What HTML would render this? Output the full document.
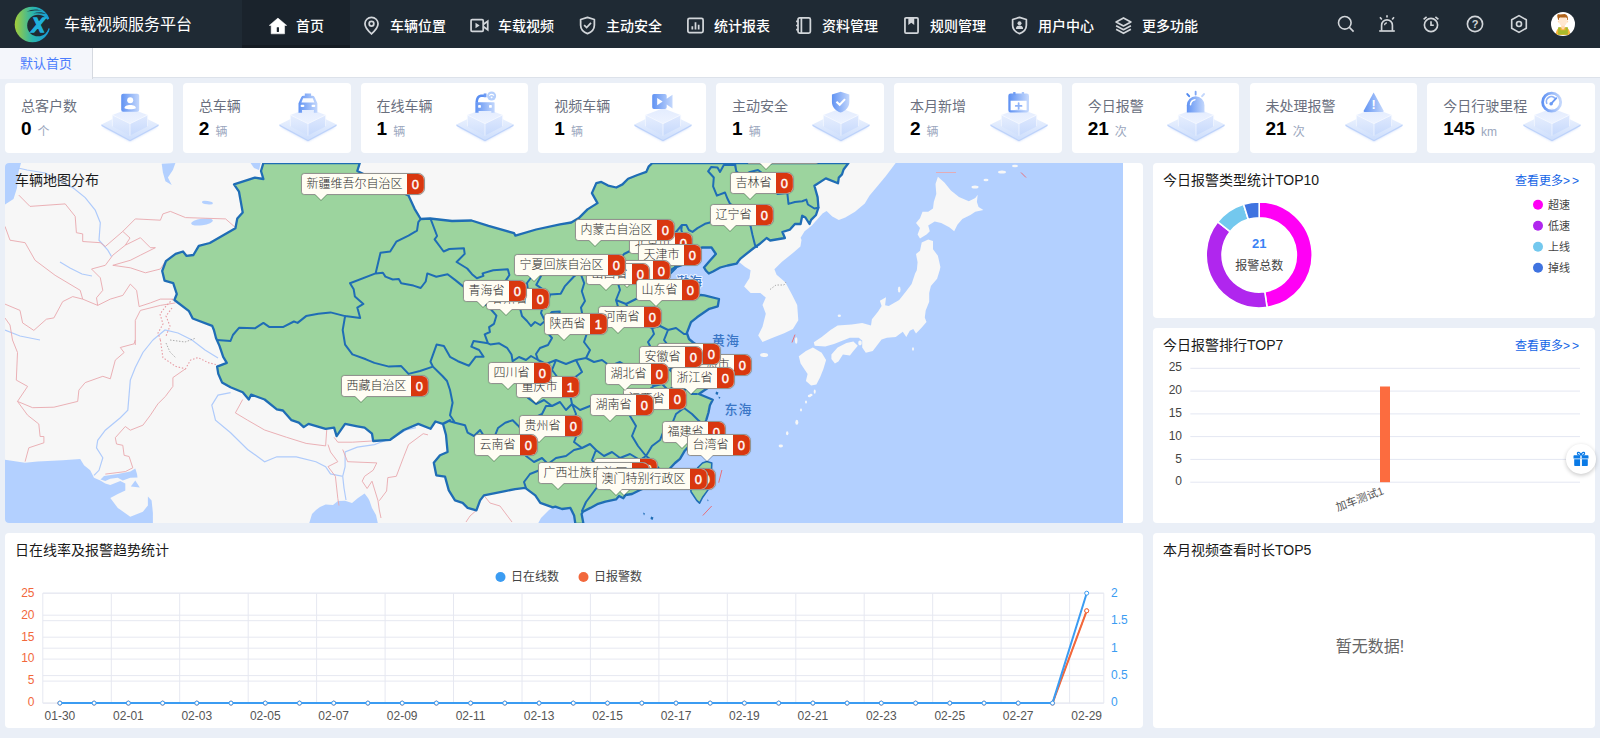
<!DOCTYPE html>
<html lang="zh-CN">
<head>
<meta charset="utf-8">
<title>车载视频服务平台</title>
<style>
*{box-sizing:border-box;margin:0;padding:0}
html,body{width:1600px;height:738px;overflow:hidden}
body{position:relative;background:#eaeff7;font-family:"Liberation Sans","Noto Sans CJK SC",sans-serif;color:#333;font-size:13px}
.abs{position:absolute}
#nav{position:absolute;left:0;top:0;width:1600px;height:48px;background:#1f2a34}
#nav .brand{position:absolute;left:64px;top:0;height:48px;line-height:50px;font-size:16px;color:#fff;white-space:nowrap;letter-spacing:0}
#nav .item{position:absolute;top:0;height:48px;width:108px;display:flex;align-items:center;justify-content:center;padding-top:1px;color:#fff;font-size:14px;font-weight:500;white-space:nowrap}
#nav .item svg{width:19px;height:19px;margin-right:9px;margin-top:1px;flex:none}
#nav .item.on{background:#1a232c;box-shadow:inset 0 -3px 0 #151c23}
#nav .tool{position:absolute;top:14px;width:20px;height:20px}
#tabs{position:absolute;left:0;top:48px;width:1600px;height:30px;background:#fff;border-bottom:1px solid #dde2ea}
#tabs .t{position:absolute;left:0;top:0;width:93px;height:31px;background:#f4f6fb;border-right:1px solid #d5d9e0;color:#4c7dfd;font-size:13px;line-height:32px;text-align:center;padding-left:0}
.card{position:absolute;top:83px;width:168px;height:70px;background:#fff;border-radius:4px}
.card .tt{position:absolute;left:16px;top:14px;font-size:14px;color:#6a6f7e;line-height:18px;white-space:nowrap}
.card .nm{position:absolute;left:16px;top:34px;font-size:19px;font-weight:bold;color:#000;line-height:24px;white-space:nowrap}
.card .nm i{font-style:normal;font-weight:normal;font-size:12px;color:#9aa6bd;margin-left:6px;position:relative;top:1px}
.card svg{position:absolute;right:8px;top:6px;width:70px;height:60px}
.panel{position:absolute;background:#fff;border-radius:4px;overflow:hidden}
.ptitle{position:absolute;left:10px;top:8px;font-size:13px;color:#1a1a1a;line-height:18px;white-space:nowrap}
.more{position:absolute;right:14px;top:9px;font-size:12px;color:#1464e6;line-height:18px;white-space:nowrap}
.lb{position:absolute;height:22px;white-space:nowrap;font-size:12px;line-height:19px}
.lb i{display:flex;height:22px;border:1px solid #939390;border-radius:4px 7px 7px 4px;overflow:hidden;font-style:normal;background:#fffdf3;box-shadow:0 0 1px rgba(0,0,0,.25)}
.lb b{display:block;font-weight:300;background:#fffdf3;padding:0 4px 0 4.5px;color:#2e2e2e;height:20px;line-height:21px}
.lb u{display:block;text-decoration:none;width:17.5px;height:20px;background:#d9370f;color:#fff;font-weight:normal;-webkit-text-stroke:.4px #fff;text-align:center;line-height:21px;font-size:13px;box-shadow:inset -1px 0 0 rgba(255,255,255,.12)}
.lb s{position:absolute;left:14px;top:21px;width:0;height:0;border-left:6px solid transparent;border-right:6px solid transparent;border-top:6.5px solid #fffdf3;text-decoration:none;filter:drop-shadow(0 1px 0.5px rgba(0,0,0,.3))}
</style>
</head>
<body>
<div id="nav">
<svg class="abs" style="left:12px;top:4px" width="42" height="42" viewBox="0 0 42 42">
<defs><linearGradient id="lg" x1="0" y1="0" x2="1" y2="0"><stop offset="0" stop-color="#a4cd39"/><stop offset=".5" stop-color="#2bb5ab"/><stop offset="1" stop-color="#1598e0"/></linearGradient>
<mask id="lm"><rect width="42" height="42" fill="#fff"/><circle cx="26" cy="21.5" r="10.8" fill="#000"/><path d="M26 21 L42 12 L42 26 Z" fill="#000"/></mask></defs>
<circle cx="20.5" cy="20.5" r="17.8" fill="url(#lg)" mask="url(#lm)"/>
<path d="M14 8 C20 4.5 26 5 30 6.8 C24 6.2 19 7 14 8Z M21 9.5 C26 7.5 31 8 34 10 C29 9.3 25 9.2 21 9.5Z" fill="#1f2a34" opacity=".85"/>
<text x="26.3" y="28.2" font-family="Liberation Sans,sans-serif" font-size="19.5" font-weight="bold" font-style="italic" text-anchor="middle" fill="#1fb0dc" stroke="#1fb0dc" stroke-width="1.3">X</text>
</svg>
<div class="brand">车载视频服务平台</div>
<div class="item on" style="left:242px"><svg viewBox="0 0 18 18"><path d="M9.4 2 L1.2 8.9 H3 V16.9 H15.7 V8.9 H17.7 Z" fill="#fff" stroke="#fff" stroke-width=".5" stroke-linejoin="round"/><rect x="8.3" y="10.6" width="2.1" height="4.6" rx=".4" fill="#1a232c"/></svg>首页</div>
<div class="item" style="left:350px"><svg viewBox="0 0 18 18" fill="none" stroke="#d2d6da" stroke-width="1.65"><path d="M9 1.3c3.5 0 6.2 2.7 6.2 6.1 0 4-6.2 9.6-6.2 9.6S2.8 11.4 2.8 7.4C2.8 4 5.5 1.3 9 1.300z"/><circle cx="9" cy="7.4" r="2.2"/></svg>车辆位置</div>
<div class="item" style="left:458px"><svg viewBox="0 0 18 18" fill="none" stroke="#d2d6da" stroke-width="1.65"><rect x="1" y="3.5" width="11.5" height="11" rx="1"/><path d="M12.5 8 L16.8 5 V13 L12.5 10"/><path d="M5.2 6.3 L9.2 9 L5.2 11.700z" fill="#d2d6da" stroke="none"/></svg>车载视频</div>
<div class="item" style="left:566px"><svg viewBox="0 0 18 18" fill="none" stroke="#d2d6da" stroke-width="1.65"><path d="M9 1.3 L15.5 3.3 V8.8 c0 4.2 -3 6.6 -6.5 7.9 C5.5 15.4 2.5 13 2.5 8.8 V3.3 Z" stroke-linejoin="round"/><path d="M5.8 8.6 L8.2 11 L12.3 6.6"/></svg>主动安全</div>
<div class="item" style="left:674px"><svg viewBox="0 0 18 18" fill="none" stroke="#d2d6da" stroke-width="1.65"><rect x="1.8" y="2.3" width="14.4" height="13.4" rx="1.5"/><path d="M6 12.8 V9.8 M9 12.8 V6 M12 12.8 V8.3"/></svg>统计报表</div>
<div class="item" style="left:782px"><svg viewBox="0 0 18 18" fill="none" stroke="#d2d6da" stroke-width="1.65"><rect x="3.8" y="1.8" width="11.7" height="14.4" rx="1.5"/><path d="M7 1.8 V16.2 M2 5 H4 M2 9 H4 M2 13 H4"/></svg>资料管理</div>
<div class="item" style="left:890px"><svg viewBox="0 0 18 18" fill="none" stroke="#d2d6da" stroke-width="1.65"><rect x="2.8" y="1.8" width="12.4" height="14.4" rx="1"/><path d="M6 2 h5.6 v6.6 l-2.8 -2.2 l-2.8 2.2 z" fill="#d2d6da" stroke="none"/></svg>规则管理</div>
<div class="item" style="left:998px"><svg viewBox="0 0 18 18" fill="none" stroke="#d2d6da" stroke-width="1.65"><path d="M9 1.3 L15.5 3.3 V8.8 c0 4.2 -3 6.6 -6.5 7.9 C5.5 15.4 2.5 13 2.5 8.8 V3.3 Z" stroke-linejoin="round"/><circle cx="9" cy="6.8" r="1.9" fill="#d2d6da" stroke="none"/><path d="M5.6 12.3 c0-2.2 1.6-3.2 3.4-3.2 s3.4 1 3.4 3.2 z" fill="#d2d6da" stroke="none"/></svg>用户中心</div>
<div class="item" style="left:1102px"><svg viewBox="0 0 18 18" fill="none" stroke="#d2d6da" stroke-width="1.65" stroke-linejoin="round"><path d="M9 1.8 L16 5.6 L9 9.4 L2 5.6 Z"/><path d="M2 9.2 L9 13 L16 9.2"/><path d="M2 12.6 L9 16.4 L16 12.6"/></svg>更多功能</div>

<svg class="tool" style="left:1336px" viewBox="0 0 20 20" fill="none" stroke="#d2d6da" stroke-width="1.6"><circle cx="8.8" cy="8.8" r="6.3"/><path d="M13.4 13.4 L17.6 17.6"/></svg>
<svg class="tool" style="left:1377px" viewBox="0 0 20 20" fill="none" stroke="#d2d6da" stroke-width="1.65"><path d="M4.6 16.8 V11.2 a5.4 5.4 0 0 1 10.8 0 V16.8"/><path d="M2.2 17 H17.8"/><path d="M10 1.2 V3.6 M3 3.2 L4.8 5.4 M17 3.2 L15.2 5.4"/><path d="M7.6 11.2 a2.4 2.4 0 0 1 2.4-2.4" stroke-width="1.2"/></svg>
<svg class="tool" style="left:1421px" viewBox="0 0 20 20" fill="none" stroke="#d2d6da" stroke-width="1.65"><circle cx="10" cy="11" r="6.6"/><path d="M10 7.2 V11.2 H12.8"/><path d="M2.6 5.3 L5.6 2.8 M17.4 5.3 L14.4 2.8"/></svg>
<svg class="tool" style="left:1465px" viewBox="0 0 20 20" fill="none" stroke="#d2d6da" stroke-width="1.65"><circle cx="10" cy="10" r="7.6"/><text x="10" y="14" text-anchor="middle" font-family="Liberation Sans,sans-serif" font-weight="bold" font-size="11" fill="#d2d6da" stroke="none">?</text></svg>
<svg class="tool" style="left:1509px" viewBox="0 0 20 20" fill="none" stroke="#d2d6da" stroke-width="1.65" stroke-linejoin="round"><path d="M10 1.6 L17.3 5.8 V14.2 L10 18.4 L2.7 14.2 V5.8 Z"/><circle cx="10" cy="10" r="2.5"/></svg>
<svg class="abs" style="left:1551px;top:11.800px" width="24" height="24" viewBox="0 0 24 24"><defs><clipPath id="av"><circle cx="12" cy="12" r="12"/></clipPath></defs><circle cx="12" cy="12" r="12" fill="#fff"/><g clip-path="url(#av)"><path d="M4.8 23 c0-4.5 1.8-7 4.2-7.8 h6 c2.4 .8 4.2 3.3 4.2 7.800z" fill="#f7b23b"/><path d="M10.3 12 h3.4 v4 l-1.7 1.8 l-1.7-1.800z" fill="#ffd9b3"/><path d="M7.1 15.3 h2.4 v3 h5 v-3 h2.4 v7.2 h-9.800z" fill="#a8ba2c"/><circle cx="7.7" cy="9.5" r=".9" fill="#ffd7ad"/><circle cx="16.3" cy="9.5" r=".9" fill="#ffd7ad"/><ellipse cx="12" cy="9.2" rx="4.1" ry="4.7" fill="#ffe7d1"/><path d="M6.3 4.6 C5.9 2.6 7 2.1 8.6 2.4 L13.8 2.1 C16.2 2.9 17.3 4.6 16.9 8.1 L16.1 8.1 C16.2 6.6 15.8 5.8 15 5.5 L9.2 5.5 C8.2 5.8 7.9 6.6 7.9 8.1 L7.3 8.1 C6.9 6.6 6.4 5.7 6.3 4.600Z" fill="#b0631a"/></g></svg>
</div>
<div id="tabs"><div class="t">默认首页</div></div>
<svg width="0" height="0" style="position:absolute"><defs>
<linearGradient id="pb" x1="0" y1="0" x2="0" y2="1"><stop offset="0" stop-color="#f3f7ff"/><stop offset="1" stop-color="#cddefc"/></linearGradient>
<linearGradient id="pi" x1="0" y1="0" x2="1" y2="0"><stop offset="0" stop-color="#6193f3"/><stop offset="1" stop-color="#c3d7fc"/></linearGradient>
<linearGradient id="pt" x1="0" y1="0" x2="0" y2="1"><stop offset="0" stop-color="#e3ecfe"/><stop offset="1" stop-color="#edf3ff"/></linearGradient>
<linearGradient id="pl" x1="0" y1="0" x2="0" y2="1"><stop offset="0" stop-color="#e6eefe"/><stop offset="1" stop-color="#cfdffc"/></linearGradient>
<linearGradient id="pr" x1="0" y1="0" x2="0" y2="1"><stop offset="0" stop-color="#dfe9fe"/><stop offset="1" stop-color="#c6d9fc"/></linearGradient>
<filter id="bl" x="-20%" y="-20%" width="140%" height="160%"><feGaussianBlur stdDeviation="1.2"/></filter>
</defs></svg>
<div class="card" style="left:5.0px;width:167.8px"><div class="tt">总客户数</div><div class="nm">0<i>个</i></div><svg viewBox="0 0 70 60"><polygon points="8,38 35,52.5 62,38 35,28" fill="#a9c4f8" opacity=".6" filter="url(#bl)"/><polygon points="6.4,36.9 35,52.3 63.6,36.9 63.6,35.6 6.4,35.6" fill="#bdd2fa"/><polygon points="6.4,35.6 35,51 63.6,35.6 35,21.5" fill="url(#pb)"/><polygon points="17.4,26 35,34.7 35,46.6 17.4,37.4" fill="url(#pl)"/><polygon points="35,34.7 52.6,26 52.6,37.4 35,46.6" fill="url(#pr)"/><polygon points="17.4,26 35,19.3 52.6,26 35,34.7" fill="url(#pt)"/><path d="M17.4 26 L35 34.7 L52.6 26 M35 34.7 V46.6 M17.4 26 V37.4 M52.6 26 V37.4" fill="none" stroke="#f6f9ff" stroke-width=".7"/><g transform="translate(26.2,4.7)"><rect x="0" y="0" width="18" height="18" rx="2" fill="url(#pi)"/><circle cx="9" cy="6.6" r="3" fill="#fff"/><path d="M3.3 14.6 c0-2.5 2.4-3.3 5.7-3.3 s5.7 .8 5.7 3.3 c-1.5 .7-3.5 1-5.7 1 s-4.2-.3-5.7-1z" fill="#fff"/></g></svg></div>
<div class="card" style="left:182.8px;width:167.8px"><div class="tt">总车辆</div><div class="nm">2<i>辆</i></div><svg viewBox="0 0 70 60"><polygon points="8,38 35,52.5 62,38 35,28" fill="#a9c4f8" opacity=".6" filter="url(#bl)"/><polygon points="6.4,36.9 35,52.3 63.6,36.9 63.6,35.6 6.4,35.6" fill="#bdd2fa"/><polygon points="6.4,35.6 35,51 63.6,35.6 35,21.5" fill="url(#pb)"/><polygon points="17.4,26 35,34.7 35,46.6 17.4,37.4" fill="url(#pl)"/><polygon points="35,34.7 52.6,26 52.6,37.4 35,46.6" fill="url(#pr)"/><polygon points="17.4,26 35,19.3 52.6,26 35,34.7" fill="url(#pt)"/><path d="M17.4 26 L35 34.7 L52.6 26 M35 34.7 V46.6 M17.4 26 V37.4 M52.6 26 V37.4" fill="none" stroke="#f6f9ff" stroke-width=".7"/><g transform="translate(25.5,4.3) scale(1.05)"><path d="M6 0.3 h6 v2.3 h-6z M0 18.5 V9.5 L2.6 3.8 Q3.2 2.4 4.8 2.4 H13.2 Q14.8 2.4 15.4 3.8 L18 9.5 V18.5 H14.6 V15.8 H3.4 V18.5 Z" fill="url(#pi)"/><path d="M2.8 8.8 L4.4 4.8 H13.6 L15.2 8.8 Z" fill="#fff" opacity=".95"/><rect x="2" y="11" width="3.6" height="2" rx="1" fill="#fff"/><rect x="12.4" y="11" width="3.6" height="2" rx="1" fill="#fff"/></g></svg></div>
<div class="card" style="left:360.6px;width:167.8px"><div class="tt">在线车辆</div><div class="nm">1<i>辆</i></div><svg viewBox="0 0 70 60"><polygon points="8,38 35,52.5 62,38 35,28" fill="#a9c4f8" opacity=".6" filter="url(#bl)"/><polygon points="6.4,36.9 35,52.3 63.6,36.9 63.6,35.6 6.4,35.6" fill="#bdd2fa"/><polygon points="6.4,35.6 35,51 63.6,35.6 35,21.5" fill="url(#pb)"/><polygon points="17.4,26 35,34.7 35,46.6 17.4,37.4" fill="url(#pl)"/><polygon points="35,34.7 52.6,26 52.6,37.4 35,46.6" fill="url(#pr)"/><polygon points="17.4,26 35,19.3 52.6,26 35,34.7" fill="url(#pt)"/><path d="M17.4 26 L35 34.7 L52.6 26 M35 34.7 V46.6 M17.4 26 V37.4 M52.6 26 V37.4" fill="none" stroke="#f6f9ff" stroke-width=".7"/><g transform="translate(24.2,2.7) scale(1.16)"><path d="M1 18.2 V9.6 Q1 9 1.6 9 H17 Q17.6 9 17.6 9.6 V18.2 H14.8 V16.6 H3.8 V18.2 Z" fill="url(#pi)"/><rect x="3.4" y="11.5" width="2.4" height="2.3" rx=".4" fill="#fff"/><rect x="12.8" y="11.5" width="2.4" height="2.3" rx=".4" fill="#fff"/><path d="M2.1 9.4 C2.3 5.6 3.6 3.7 5.8 3.5 H9.4" fill="none" stroke="#5b8ff2" stroke-width="2.2"/><rect x="8.2" y="1.5" width="2.4" height="3.3" fill="#6b9af4"/><circle cx="15" cy="3.7" r="3.9" fill="#b5cffb"/><path d="M12.9 3.3 a3 3 0 0 1 4.2 0" fill="none" stroke="#fff" stroke-width=".9"/><path d="M13.9 4.6 L15 5.9 L16.1 4.6 a1.6 1.6 0 0 0 -2.2 0z" fill="#fff"/></g></svg></div>
<div class="card" style="left:538.3px;width:167.8px"><div class="tt">视频车辆</div><div class="nm">1<i>辆</i></div><svg viewBox="0 0 70 60"><polygon points="8,38 35,52.5 62,38 35,28" fill="#a9c4f8" opacity=".6" filter="url(#bl)"/><polygon points="6.4,36.9 35,52.3 63.6,36.9 63.6,35.6 6.4,35.6" fill="#bdd2fa"/><polygon points="6.4,35.6 35,51 63.6,35.6 35,21.5" fill="url(#pb)"/><polygon points="17.4,26 35,34.7 35,46.6 17.4,37.4" fill="url(#pl)"/><polygon points="35,34.7 52.6,26 52.6,37.4 35,46.6" fill="url(#pr)"/><polygon points="17.4,26 35,19.3 52.6,26 35,34.7" fill="url(#pt)"/><path d="M17.4 26 L35 34.7 L52.6 26 M35 34.7 V46.6 M17.4 26 V37.4 M52.6 26 V37.4" fill="none" stroke="#f6f9ff" stroke-width=".7"/><g transform="translate(24.2,2.7) scale(1.16)"><path d="M1.5 2 H11 Q12.5 2 12.5 3.5 V6 L17.5 2.6 V14.4 L12.5 11 V13.5 Q12.5 15 11 15 H1.5 Q0 15 0 13.5 V3.5 Q0 2 1.5 2Z" fill="url(#pi)"/><path d="M4.3 5.4 L9 8.5 L4.3 11.600z" fill="#fff"/></g></svg></div>
<div class="card" style="left:716.1px;width:167.8px"><div class="tt">主动安全</div><div class="nm">1<i>辆</i></div><svg viewBox="0 0 70 60"><polygon points="8,38 35,52.5 62,38 35,28" fill="#a9c4f8" opacity=".6" filter="url(#bl)"/><polygon points="6.4,36.9 35,52.3 63.6,36.9 63.6,35.6 6.4,35.6" fill="#bdd2fa"/><polygon points="6.4,35.6 35,51 63.6,35.6 35,21.5" fill="url(#pb)"/><polygon points="17.4,26 35,34.7 35,46.6 17.4,37.4" fill="url(#pl)"/><polygon points="35,34.7 52.6,26 52.6,37.4 35,46.6" fill="url(#pr)"/><polygon points="17.4,26 35,19.3 52.6,26 35,34.7" fill="url(#pt)"/><path d="M17.4 26 L35 34.7 L52.6 26 M35 34.7 V46.6 M17.4 26 V37.4 M52.6 26 V37.4" fill="none" stroke="#f6f9ff" stroke-width=".7"/><g transform="translate(24.2,2.7) scale(1.16)"><path d="M9 0 L16.5 2.4 V8.8 c0 4.8-3.5 7.6-7.5 9.2 C5 16.4 1.5 13.6 1.5 8.8 V2.4 Z" fill="url(#pi)"/><path d="M5.4 8.6 L8.2 11.3 L12.8 6.4" fill="none" stroke="#fff" stroke-width="1.8"/></g></svg></div>
<div class="card" style="left:893.9px;width:167.8px"><div class="tt">本月新增</div><div class="nm">2<i>辆</i></div><svg viewBox="0 0 70 60"><polygon points="8,38 35,52.5 62,38 35,28" fill="#a9c4f8" opacity=".6" filter="url(#bl)"/><polygon points="6.4,36.9 35,52.3 63.6,36.9 63.6,35.6 6.4,35.6" fill="#bdd2fa"/><polygon points="6.4,35.6 35,51 63.6,35.6 35,21.5" fill="url(#pb)"/><polygon points="17.4,26 35,34.7 35,46.6 17.4,37.4" fill="url(#pl)"/><polygon points="35,34.7 52.6,26 52.6,37.4 35,46.6" fill="url(#pr)"/><polygon points="17.4,26 35,19.3 52.6,26 35,34.7" fill="url(#pt)"/><path d="M17.4 26 L35 34.7 L52.6 26 M35 34.7 V46.6 M17.4 26 V37.4 M52.6 26 V37.4" fill="none" stroke="#f6f9ff" stroke-width=".7"/><g transform="translate(24.2,2.7) scale(1.16)"><path d="M1 2.4 H17 V7.8 H1Z" fill="url(#pi)"/><rect x="1.1" y="2.5" width="15.8" height="14.5" rx="1" fill="none" stroke="url(#pi)" stroke-width="2"/><path d="M5.3 0.3 V3" stroke="#6f9df5" stroke-width="2"/><path d="M12.7 0.3 V3" stroke="#a9c6fa" stroke-width="2"/><path d="M9 9.8 V14.8 M6.5 12.3 H11.5" stroke="#8fb3f8" stroke-width="1.5" stroke-linecap="round"/></g></svg></div>
<div class="card" style="left:1071.7px;width:167.8px"><div class="tt">今日报警</div><div class="nm">21<i>次</i></div><svg viewBox="0 0 70 60"><polygon points="8,38 35,52.5 62,38 35,28" fill="#a9c4f8" opacity=".6" filter="url(#bl)"/><polygon points="6.4,36.9 35,52.3 63.6,36.9 63.6,35.6 6.4,35.6" fill="#bdd2fa"/><polygon points="6.4,35.6 35,51 63.6,35.6 35,21.5" fill="url(#pb)"/><polygon points="17.4,26 35,34.7 35,46.6 17.4,37.4" fill="url(#pl)"/><polygon points="35,34.7 52.6,26 52.6,37.4 35,46.6" fill="url(#pr)"/><polygon points="17.4,26 35,19.3 52.6,26 35,34.7" fill="url(#pt)"/><path d="M17.4 26 L35 34.7 L52.6 26 M35 34.7 V46.6 M17.4 26 V37.4 M52.6 26 V37.4" fill="none" stroke="#f6f9ff" stroke-width=".7"/><g transform="translate(24.2,2.7) scale(1.16)"><path d="M1.4 18 V11.6 a7.6 7.6 0 0 1 15.2 0 V18 Z" fill="url(#pi)"/><path d="M4.6 11.2 a4.6 4.6 0 0 1 3.8-4.3" stroke="#fff" stroke-width="1.3" fill="none" stroke-linecap="round"/><path d="M9 0 V2.4" stroke="#7ea6f5" stroke-width="1.6" stroke-linecap="round"/><path d="M1.8 2 L3.4 3.9" stroke="#4f88f0" stroke-width="1.7" stroke-linecap="round"/><path d="M16.2 2 L14.6 3.9" stroke="#c3d7fc" stroke-width="1.7" stroke-linecap="round"/></g></svg></div>
<div class="card" style="left:1249.5px;width:167.8px"><div class="tt">未处理报警</div><div class="nm">21<i>次</i></div><svg viewBox="0 0 70 60"><polygon points="8,38 35,52.5 62,38 35,28" fill="#a9c4f8" opacity=".6" filter="url(#bl)"/><polygon points="6.4,36.9 35,52.3 63.6,36.9 63.6,35.6 6.4,35.6" fill="#bdd2fa"/><polygon points="6.4,35.6 35,51 63.6,35.6 35,21.5" fill="url(#pb)"/><polygon points="17.4,26 35,34.7 35,46.6 17.4,37.4" fill="url(#pl)"/><polygon points="35,34.7 52.6,26 52.6,37.4 35,46.6" fill="url(#pr)"/><polygon points="17.4,26 35,19.3 52.6,26 35,34.7" fill="url(#pt)"/><path d="M17.4 26 L35 34.7 L52.6 26 M35 34.7 V46.6 M17.4 26 V37.4 M52.6 26 V37.4" fill="none" stroke="#f6f9ff" stroke-width=".7"/><g transform="translate(24.2,2.7) scale(1.16)"><path d="M9 0.6 L17.6 16.4 Q18 17.4 17 17.4 H1 Q0 17.4 .4 16.4 Z" fill="url(#pi)"/><text x="9" y="15.3" text-anchor="middle" font-family="Liberation Sans,sans-serif" font-weight="bold" font-size="11" fill="#fff">!</text></g></svg></div>
<div class="card" style="left:1427.2px;width:167.8px"><div class="tt">今日行驶里程</div><div class="nm">145<i>km</i></div><svg viewBox="0 0 70 60"><polygon points="8,38 35,52.5 62,38 35,28" fill="#a9c4f8" opacity=".6" filter="url(#bl)"/><polygon points="6.4,36.9 35,52.3 63.6,36.9 63.6,35.6 6.4,35.6" fill="#bdd2fa"/><polygon points="6.4,35.6 35,51 63.6,35.6 35,21.5" fill="url(#pb)"/><polygon points="17.4,26 35,34.7 35,46.6 17.4,37.4" fill="url(#pl)"/><polygon points="35,34.7 52.6,26 52.6,37.4 35,46.6" fill="url(#pr)"/><polygon points="17.4,26 35,19.3 52.6,26 35,34.7" fill="url(#pt)"/><path d="M17.4 26 L35 34.7 L52.6 26 M35 34.7 V46.6 M17.4 26 V37.4 M52.6 26 V37.4" fill="none" stroke="#f6f9ff" stroke-width=".7"/><g transform="translate(24.2,2.7) scale(1.16)"><circle cx="9" cy="9" r="7.8" fill="none" stroke="url(#pi)" stroke-width="2.4"/><path d="M5 10.5 a4.2 4.2 0 0 1 7-4.6" fill="none" stroke="#8fb3f8" stroke-width="1.5"/><path d="M8.2 10.8 L13 5.6" stroke="#6a9af4" stroke-width="1.6" stroke-linecap="round"/><circle cx="8.6" cy="10.4" r="1.5" fill="#6a9af4"/></g></svg></div>
<div class="panel" style="left:5px;top:163px;width:1138px;height:360px">
<svg class="abs" style="left:0;top:0" width="1118" height="360" viewBox="5 163 1118 360" font-family="Liberation Sans,Noto Sans CJK SC,sans-serif">
<rect x="5" y="163" width="1118" height="360" fill="#f7f7f7"/>
<polygon points="895.7,163.0 885.9,176.0 877.8,185.8 869.6,195.5 864.8,203.6 855.0,211.8 845.3,217.5 838.8,219.9 832.3,216.6 826.6,211.0 822.5,213.4 817.6,219.1 811.9,225.6 804.6,231.3 800.6,237.8 801.5,240.0 800.4,246.5 792.9,253.0 782.0,261.7 774.4,269.3 776.6,274.7 785.3,282.3 791.8,294.2 797.2,305.0 798.3,320.2 792.9,328.9 784.2,333.2 773.3,337.5 762.5,341.9 758.2,335.4 762.5,326.7 765.8,313.7 762.5,305.0 765.8,297.4 760.3,293.1 750.6,293.1 744.1,286.6 749.5,277.9 750.6,270.3 745.2,267.1 738.7,261.7 736.0,260.0 736.5,263.7 727.6,265.5 720.2,267.5 713.0,271.5 708.8,273.5 706.1,270.8 704.0,267.5 710.5,260.0 715.9,254.0 711.5,247.5 701.8,247.5 697.0,253.0 692.0,258.0 685.0,264.0 674.0,268.0 665.0,274.0 664.0,281.0 668.0,287.0 677.0,289.0 681.0,296.0 690.0,299.0 700.7,295.0 704.4,295.4 719.0,299.0 717.8,306.3 709.3,308.8 697.0,317.3 691.0,322.2 686.9,333.0 689.0,339.0 693.2,342.5 702.8,348.9 708.0,358.0 711.0,368.0 712.0,378.0 706.0,382.0 711.0,386.0 704.0,390.5 699.0,394.0 705.6,396.8 712.8,399.7 709.9,405.3 708.5,412.5 706.4,419.6 704.0,425.0 700.0,428.0 695.0,437.0 690.0,445.0 684.8,450.7 680.0,458.8 675.0,463.0 670.6,467.8 667.8,471.0 660.0,478.0 651.8,485.2 640.0,490.0 632.0,494.0 625.5,495.0 623.4,498.2 619.0,496.0 616.0,499.4 605.4,501.7 597.2,504.2 590.4,507.9 582.9,511.7 581.6,514.0 583.5,524.0 575.4,524.0 574.1,515.4 570.4,507.9 562.0,509.0 555.3,506.7 552.8,507.3 552.8,507.3 549.0,510.0 545.0,514.0 541.0,518.0 537.8,524.0 1123.0,524.0 1123.0,163.0" fill="#b3d0ff"/>
<polygon points="5.0,459.8 25.0,462.8 37.6,461.6 62.7,460.3 80.2,459.0 84.0,465.3 90.2,470.3 94.0,477.8 100.3,480.4 105.3,483.5 110.3,485.0 120.3,481.0 125.3,483.5 125.3,490.4 117.8,494.1 110.3,497.9 117.8,507.9 130.3,516.7 142.9,511.7 147.9,505.4 147.9,496.6 151.6,500.4 152.9,512.9 152.9,524.0 5.0,524.0" fill="#b3d0ff"/>
<polygon points="100.5,479.5 104.0,476.0 117.8,474.0 130.3,471.5 135.3,468.5 137.0,474.0 137.5,477.5 130.3,477.8 122.8,480.6 117.8,477.8 110.3,478.8 105.3,481.0" fill="#b3d0ff"/>
<polygon points="135.3,480.4 139.8,487.4 130.8,486.6" fill="#b3d0ff"/>
<polygon points="309.0,524.0 312.0,514.0 316.0,510.0 320.0,507.0 325.6,504.4 333.0,505.0 338.0,501.0 345.1,500.7 352.0,503.0 358.0,498.0 364.6,493.4 368.0,498.0 369.5,500.7 372.0,508.0 376.0,515.0 378.0,524.0" fill="#b3d0ff"/>
<polygon points="5.0,163.0 21.0,163.0 18.5,172.0 17.0,188.0 13.5,199.0 5.0,204.6" fill="#b3d0ff"/>
<polygon points="161.7,163.8 175.4,163.0 172.9,170.0 167.9,177.5 171.7,185.0 165.4,181.3 162.9,172.5" fill="#b3d0ff"/>
<polygon points="250.6,163.0 260.7,163.0 259.0,170.0 254.0,168.0" fill="#b3d0ff"/>
<ellipse cx="202" cy="222" rx="11" ry="3.3" transform="rotate(-8 202 222)" fill="#b3d0ff"/>
<ellipse cx="207.5" cy="202.6" rx="5.5" ry="1.6" transform="rotate(8 207 202)" fill="#b3d0ff"/>
<polygon points="937.9,176.8 944.4,182.5 950.9,190.6 959.0,197.1 968.8,201.2 975.3,197.9 977.7,194.7 976.9,202.0 978.6,206.9 983.4,210.1 975.3,211.8 970.4,215.0 962.3,219.1 957.4,224.8 954.2,231.3 949.3,227.2 941.2,223.1 934.7,221.5 928.2,225.6 929.8,231.3 926.5,234.5 920.0,238.6 917.6,234.5 920.0,228.0 916.0,223.1 920.0,218.3 922.5,211.8 928.2,211.8 933.0,208.5 933.8,202.0 936.3,193.9 935.5,184.1" fill="#f7f7f7"/>
<polygon points="921.7,242.6 928.2,239.4 933.0,241.0 933.0,249.2 937.9,255.7 940.4,267.0 939.8,270.0 937.1,278.8 930.9,285.9 929.2,292.9 929.2,301.7 925.7,310.5 924.8,317.6 926.5,322.0 921.3,328.1 916.0,333.4 913.3,329.0 909.8,330.8 906.3,336.9 902.8,331.7 895.7,336.9 886.9,337.8 881.6,339.6 878.1,344.0 872.8,351.0 865.8,352.8 862.2,347.5 862.2,340.5 858.7,337.8 849.9,337.8 842.9,340.5 834.0,344.0 825.2,346.6 814.7,345.8 813.8,342.2 821.7,336.9 830.5,329.9 837.6,325.5 851.7,324.6 862.2,322.9 871.0,325.5 871.9,319.3 878.1,311.4 881.6,306.1 879.9,300.8 886.0,297.3 885.1,305.2 888.7,306.1 899.2,300.0 906.3,291.1 911.6,284.1 915.1,273.5 916.9,270.0 913.5,280.0 916.8,270.3 917.6,262.2 916.0,254.0 920.0,250.8" fill="#f7f7f7"/>
<polygon points="798.8,356.3 805.9,351.0 812.9,347.5 821.7,352.8 826.1,359.9 823.5,368.7 820.0,377.5 816.4,384.5 811.1,385.4 805.9,381.0 807.6,373.9 804.1,368.7 800.6,363.4" fill="#f7f7f7"/>
<polygon points="831.4,354.6 837.6,347.5 846.4,343.1 853.4,341.4 857.8,345.8 853.4,351.0 849.9,355.4 842.9,354.6 838.4,361.6 834.9,363.4 831.4,359.0" fill="#f7f7f7"/>
<ellipse cx="764.1" cy="354.9" rx="4" ry="2" fill="#f7f7f7"/>
<ellipse cx="796.2" cy="340.5" rx="1.2" ry="3.2" fill="#f7f7f7"/>
<ellipse cx="796.8" cy="422.2" rx="1.5" ry="2.5" fill="#f7f7f7"/>
<ellipse cx="787.2" cy="433.3" rx="1.2" ry="2" fill="#f7f7f7"/>
<ellipse cx="780.8" cy="446" rx="2.2" ry="1.4" fill="#f7f7f7"/>
<ellipse cx="811" cy="395" rx="1.5" ry="1.2" fill="#f7f7f7"/>
<ellipse cx="806" cy="402" rx="1" ry="1.6" fill="#f7f7f7"/>
<ellipse cx="801" cy="410" rx="1" ry="1.4" fill="#f7f7f7"/>
<ellipse cx="913" cy="349" rx="1" ry="1.8" fill="#f7f7f7"/>
<ellipse cx="899.2" cy="289.4" rx="1.3" ry="3" fill="#f7f7f7"/>
<ellipse cx="839.3" cy="315.8" rx="1.6" ry="1.2" fill="#f7f7f7"/>
<ellipse cx="814.7" cy="391.6" rx="1" ry="2.2" fill="#f7f7f7"/>
<ellipse cx="809.4" cy="396" rx="1.6" ry="1.2" fill="#f7f7f7"/>
<ellipse cx="860" cy="343" rx="1.8" ry="2.4" fill="#f7f7f7"/>
<ellipse cx="975" cy="187" rx="3.5" ry="1.5" fill="#f7f7f7"/>
<ellipse cx="986" cy="180" rx="2.5" ry="1.2" fill="#f7f7f7"/>
<ellipse cx="1002" cy="172" rx="4" ry="1.6" fill="#f7f7f7"/>
<ellipse cx="1015" cy="166" rx="3" ry="1.2" fill="#f7f7f7"/>
<path d="M18.0 168.0 L27.0 170.0 L45.1 173.0 L72.7 187.6 L85.2 197.6 L95.2 210.1 L100.3 222.7 L99.0 240.2 L107.8 250.2 L111.5 256.5M152.9 340.0 L142.9 352.5 L135.3 367.6 L130.3 380.1 L127.8 410.2 L120.3 417.7 L105.3 430.2 L97.7 440.3 L96.5 447.8 L102.8 457.8 L99.0 470.3 L94.0 475.3M152.9 340.0 L165.0 330.0 L178.0 333.0 L192.0 340.0 L205.0 350.0 L218.0 358.0M230.6 392.6 L218.0 395.1 L211.8 405.2 L215.5 420.2 L230.6 432.7 L247.6 449.5 L264.6 461.7 L276.8 456.8 L296.3 456.8 L315.9 461.7 L325.6 466.6 L330.5 473.9 L342.7 476.3 L345.1 466.6 L345.1 452.0 L357.3 447.1 L374.4 444.6 L393.9 437.3 L406.1 430.0 L415.9 427.6M342.7 476.3 L344.0 488.0 L346.0 500.0M5.0 330.0 L20.0 336.0 L40.0 340.0M60.0 262.0 L70.0 268.0 L82.0 274.0 L92.0 276.0" fill="none" stroke="#afcbfb" stroke-width="1.2"/>
<path d="M18.8 195.1 L30.0 206.4 L65.2 203.9 L75.2 216.4 L76.4 232.7 L82.7 233.9 L82.7 241.5 L100.3 242.7 L105.3 246.5 L122.8 231.4 L135.3 218.9 L160.4 220.2 L162.9 213.9 L170.4 211.4 L185.5 217.6 L225.6 218.9 L235.6 227.7M5.0 226.4 L10.0 240.2 L25.1 242.7 L35.1 260.3 L55.1 275.3 L80.2 290.3 L82.7 299.1M5.0 304.1 L20.0 310.4 L22.6 322.9 L33.8 330.4 L46.4 319.2 L53.9 317.9 L62.7 301.6 L72.7 296.6 L82.7 299.1 L97.7 305.4 L110.3 299.1 L122.8 295.4 L130.3 284.1 L136.6 290.3 L139.1 306.6 L150.4 302.9 L160.4 299.1 L172.9 299.1M97.7 305.4 L96.5 297.8 L102.8 290.3 L100.3 277.8 L91.5 269.0 L105.3 265.3 L112.8 255.2 L125.3 245.2 L140.4 237.7 L150.4 247.7 L155.4 247.7 L140.4 255.2 L130.3 260.3 L112.8 265.3 L130.3 267.8 L145.4 272.8 L160.4 269.0 L165.0 262.0M122.8 231.4 L130.0 238.0 L125.3 245.2M135.3 345.0 L135.3 320.4 L140.4 310.4 L160.4 305.4 L175.4 302.9M12.5 340.0 L17.5 352.5 L16.3 380.1 L27.6 386.4 L17.5 401.4 L27.6 415.2 L38.8 424.0 L40.1 436.5 L43.9 436.5 L43.9 442.8 L28.8 447.8 L25.1 461.6M12.5 340.0 L10.0 325.0 L5.0 318.0M17.5 401.4 L32.6 407.7 L53.9 407.2 L77.7 401.4 L78.9 390.1 L85.2 382.6 L102.8 376.3 L110.3 378.8 L115.3 360.1 L124.1 352.5 L120.3 347.5 L134.1 343.8 L135.3 340.0M185.5 368.8 L172.9 377.6 L172.9 386.4 L165.4 396.4 L157.9 403.9 L150.4 415.2 L142.9 425.2 L130.3 430.2 L125.3 426.5 L115.3 437.7 L116.5 444.0 L122.8 445.3 L124.1 455.3 L129.1 456.5 L132.8 467.8 L125.3 471.6 L105.3 474.1M242.7 399.5 L235.4 412.9 L247.6 420.2 L264.6 430.0 L286.6 437.3 L306.1 443.4 L325.6 445.9 L326.8 428.8M334.1 437.3 L337.8 442.2 L352.4 442.2 L372.0 441.0M328.0 444.6 L330.5 452.0 L337.8 461.7 L328.0 466.6 L335.4 476.3 L337.8 498.3 L339.0 505.6M342.7 449.5 L347.6 461.7 L376.8 462.9 L373.2 470.2 L364.6 476.3 L362.2 481.2 L367.1 488.5 L372.0 481.2 L378.0 500.7 L379.3 510.0 L381.0 518.0M428.0 434.9 L423.2 433.7 L408.5 444.6 L403.7 456.8 L396.3 476.3 L387.8 477.6 L386.6 491.0 L379.3 500.7M476.4 510.4 L470.0 516.0 L466.0 522.0M483.9 495.4 L490.0 503.0 L500.0 506.0 L506.0 514.0 L512.0 522.0M936.0 172.5 L956.0 172.5" fill="none" stroke="#e9a8ae" stroke-width=".9"/>
<path d="M160.4 340.0 L162.9 357.5 L175.4 366.3 L185.5 368.8 L190.5 360.1 L198.0 357.5 L208.0 362.6 L218.0 365.1M172.9 299.1 L166.0 306.0 L160.0 314.0 L163.0 324.0 L158.0 333.0 L160.4 340.0M172.0 308.0 L166.0 316.0 L170.0 326.0 L166.0 336.0" fill="none" stroke="#e79aa2" stroke-width="1.1" stroke-dasharray="1.5 1.8"/>
<path d="M166.0 343.0 L170.0 352.0 L176.0 358.0M170.0 340.0 L185.0 342.0 L196.0 338.0M770.0 289.5 L776.0 285.0 L784.0 285.0 L786.0 282.0" fill="none" stroke="#999" stroke-width=".8" stroke-dasharray="1.5 1.5"/>
<path d="M792.0 342.5 L795.0 334.6M718.7 482.7 L721.9 470.0M702.8 515.5 L711.7 506.0M1021.0 172.5 L1026.0 177.5" fill="none" stroke="#e8707a" stroke-width="1"/>
<text x="676" y="286" font-size="13" font-weight="500" fill="#3a76c6" stroke="#fff" stroke-width="2" paint-order="stroke" stroke-opacity=".7">渤海</text>
<text x="712" y="345" font-size="13" font-weight="500" fill="#3a76c6" letter-spacing="1">黄海</text>
<text x="724.5" y="414" font-size="13" font-weight="500" fill="#3a76c6" letter-spacing="1">东海</text>
<polygon points="359.8,163.0 357.3,171.0 380.0,182.0 408.5,195.4 414.6,208.8 420.7,219.0 430.0,218.5 452.0,221.0 471.5,220.5 488.5,225.9 514.1,233.2 515.4,235.6 536.1,229.5 560.0,224.4 571.3,222.5 578.8,218.1 587.5,209.4 597.5,203.1 591.9,193.1 596.3,183.1 601.3,181.9 608.1,185.6 616.3,187.5 622.5,184.4 628.1,178.8 637.5,175.0 646.3,171.9 648.8,166.3 652.5,163.0 848.5,163.0 843.6,169.5 842.0,174.4 838.8,177.6 838.0,183.3 825.8,178.4 814.4,185.8 817.6,197.1 818.4,207.7 816.0,215.0 811.1,219.9 809.5,224.0 805.4,217.5 802.2,215.8 800.6,224.0 794.9,224.0 790.0,229.6 782.4,232.0 784.9,238.0 770.2,240.5 766.6,238.0 760.0,243.7 753.8,248.0 740.8,258.3 738.5,261.0 736.5,263.7 727.6,265.5 720.2,267.5 713.0,271.5 708.8,273.5 706.1,270.8 704.0,267.5 710.5,260.0 715.9,254.0 711.5,247.5 701.8,247.5 697.0,253.0 692.0,258.0 685.0,264.0 674.0,268.0 665.0,274.0 664.0,281.0 668.0,287.0 677.0,289.0 681.0,296.0 690.0,299.0 700.7,295.0 704.4,295.4 719.0,299.0 717.8,306.3 709.3,308.8 697.0,317.3 691.0,322.2 686.9,333.0 689.0,339.0 693.2,342.5 702.8,348.9 708.0,358.0 711.0,368.0 712.0,378.0 706.0,382.0 711.0,386.0 704.0,390.5 699.0,394.0 705.6,396.8 712.8,399.7 709.9,405.3 708.5,412.5 706.4,419.6 704.0,425.0 700.0,428.0 695.0,437.0 690.0,445.0 684.8,450.7 680.0,458.8 675.0,463.0 670.6,467.8 667.8,471.0 660.0,478.0 651.8,485.2 640.0,490.0 632.0,494.0 625.5,495.0 623.4,498.2 619.0,496.0 616.0,499.4 605.4,501.7 597.2,504.2 590.4,507.9 582.9,511.7 581.6,514.0 583.5,524.0 575.4,524.0 574.1,515.4 570.4,507.9 562.0,509.0 555.3,506.7 552.8,507.3 540.3,502.9 535.3,495.4 525.2,487.9 515.2,489.1 502.7,491.6 483.9,495.4 480.1,500.4 476.4,510.4 467.6,507.9 462.6,502.9 455.0,500.4 448.8,490.4 445.0,476.6 436.3,475.3 433.8,462.8 440.0,455.3 447.6,452.0 446.0,435.0 443.0,424.0 450.0,420.2 442.7,423.9 435.4,421.5 430.5,428.8 418.3,423.9 403.7,430.0 390.2,439.8 373.2,441.0 372.0,433.7 364.6,427.6 357.3,426.3 345.1,423.9 336.6,436.1 334.1,427.6 325.6,428.8 308.5,423.9 303.7,427.1 298.8,422.7 291.5,420.2 282.9,410.5 276.8,409.3 264.6,399.5 251.2,394.6 248.8,399.5 242.7,392.2 230.5,387.3 222.0,382.4 218.3,373.9 217.1,366.6 226.8,362.9 223.2,356.8 219.5,345.9 216.0,338.0 213.9,330.0 212.2,325.9 192.7,318.5 189.0,311.2 174.4,300.0 176.8,294.0 173.2,283.2 164.6,280.7 162.2,271.0 165.9,261.2 175.6,253.9 183.0,251.5 186.6,255.9 193.4,255.0 198.8,245.9 209.8,243.0 235.4,228.3 237.3,218.5 242.7,212.4 239.0,191.7 234.0,184.4 254.9,177.6 263.4,179.0 261.0,171.0 263.4,163.0" fill="#9cd49e" stroke="#1f6db5" stroke-width="2.3" stroke-linejoin="round"/>
<polygon points="706.8,461.6 711.8,463.0 711.5,470.0 710.0,480.0 708.2,489.6 702.5,497.5 699.6,503.2 696.7,500.4 691.0,491.7 690.5,484.0 693.0,475.0 698.2,467.3 702.5,463.0" fill="#9cd49e" stroke="#1f6db5" stroke-width="1.6" stroke-linejoin="round"/>
<path d="M217.0 340.0 L230.5 341.0 L232.9 335.0 L239.0 327.8 L254.9 328.3 L263.4 322.9 L269.5 327.1 L282.9 327.1 L293.9 321.5 L297.6 322.9 L306.1 316.1 L318.3 313.7 L330.5 312.4 L345.1 316.1M345.1 316.1 L360.2 318.0 L357.3 307.6 L363.4 303.9 L354.9 296.6 L353.7 289.3 L350.0 283.2 L375.6 273.4M375.6 273.4 L380.5 252.7 L390.2 251.5 L396.3 241.7 L408.5 235.6 L417.0 230.7 L418.3 222.2 L420.7 219.0M375.6 273.4 L382.9 272.7 L385.4 276.6 L392.7 279.5 L398.8 279.0 L401.2 283.2 L413.4 285.6 L420.7 288.0 L425.7 281.5 L427.3 273.4 L436.3 276.7 L447.6 274.2 L455.0 279.9 L463.1 286.4 L470.0 290.0 L476.0 297.0 L484.0 303.0 L491.5 310.0 L496.4 315.7 L494.0 323.8 L489.1 327.1 L489.9 332.0 L484.7 334.4 L488.0 343.3M345.1 316.1 L342.7 330.0 L345.1 344.6 L352.4 354.4 L365.9 359.3 L374.4 362.9 L389.0 366.6 L401.2 366.1 L408.5 373.9 L420.0 371.0 L432.9 366.6M432.9 366.6 L430.5 361.7 L436.6 344.6 L443.9 345.9 L450.0 356.8 L457.9 361.2 L469.0 365.7 L475.8 356.7 L483.6 356.7 L479.1 350.0 L471.3 346.7 L473.5 341.1 L488.0 343.3M488.0 343.3 L490.3 344.4 L499.2 343.3 L507.0 347.8 L511.5 354.5 L512.6 361.2 L519.0 357.0 L526.0 360.0 L531.0 356.0 L538.0 360.0M432.9 366.6 L442.7 376.3 L447.0 381.0 L450.0 390.0 L452.6 402.7 L450.0 415.2 L455.0 422.7M455.0 422.7 L449.0 421.0M455.0 422.7 L465.0 425.2 L467.6 432.7 L474.0 436.0 L480.1 430.0 L487.0 441.0 L495.2 435.2 L498.0 428.0 L505.2 422.7 L512.7 420.2 L517.7 425.2 L522.0 430.0 L530.0 427.0M430.6 218.9 L437.1 236.0 L434.6 239.3 L443.6 251.5 L449.3 249.0 L463.9 248.2 L464.7 253.9 L456.6 262.0 L467.2 268.5 L472.0 274.2 L476.9 278.3 L483.4 275.9 L482.6 273.4 L493.2 270.2 L507.8 269.3 L509.4 275.0 L506.2 279.9 L509.0 286.0 L507.0 294.0 L511.0 299.0M511.0 299.0 L517.0 296.0 L523.0 298.0 L528.0 291.0 L527.0 283.0 L533.0 275.0 L538.0 271.0 L541.1 275.9 L536.3 284.8 L544.0 290.0 L550.1 294.6 L548.0 302.0 L543.0 306.0 L541.0 313.0 L545.0 321.0 L540.3 325.0 L535.0 322.0 L531.0 326.0 L527.0 321.0 L522.0 316.0 L520.0 308.0 L514.0 304.0 L511.0 299.0M550.1 294.6 L560.7 293.7 L564.7 286.4 L573.7 276.7 L580.0 272.0 L584.2 283.2M545.0 321.0 L551.7 312.0 L559.8 311.6 L558.0 320.0 L552.0 326.0 L547.0 332.0 L552.0 338.0 L548.0 345.0 L540.0 348.0 L536.0 354.0 L538.0 360.0M584.2 283.2 L581.8 291.3 L585.0 301.0 L581.0 307.6 L583.0 318.0 L582.0 328.0 L587.0 333.0M580.0 272.0 L590.0 268.0 L600.0 262.0 L612.0 258.0 L618.0 262.0M618.0 262.0 L621.0 270.0 L617.0 280.0 L620.0 290.0 L616.0 300.0 L619.0 310.0 L614.0 318.0 L607.0 326.0 L597.0 331.0 L587.0 333.0M618.0 262.0 L624.0 254.0 L632.0 250.0 L640.0 244.0 L650.0 240.0 L658.0 236.0 L668.0 238.0 L676.0 232.0 L681.9 225.0 L686.3 225.0 L688.8 230.0 L692.5 231.9 L697.5 228.1 L705.0 223.8 L710.0 222.5 L718.0 218.0 L725.0 212.0 L730.0 203.8 L727.5 198.8 L725.0 192.5 L716.9 195.6 L713.1 186.3 L713.8 177.5 L708.1 171.3 L711.3 166.9 L717.5 167.5 L720.0 171.9 L723.8 165.0 L735.0 165.0 L736.3 171.3M681.9 225.0 L681.3 230.0 L683.0 235.0 L690.0 244.0 L694.0 252.0M730.0 203.8 L738.0 208.0 L745.0 215.0 L750.6 226.3 L752.5 235.0 L755.0 245.0 L757.0 247.0M735.0 163.0 L736.3 171.3 L742.0 176.0 L750.0 172.0 L758.0 170.0 L766.0 176.0 L772.0 186.0 L777.6 194.1 L787.3 192.9 L788.5 203.9 L794.9 202.0 L802.2 201.2 L806.3 199.6 L807.9 204.5 L814.4 208.5 L818.4 207.7M616.0 300.0 L626.0 304.0 L634.0 300.0 L642.0 296.0 L650.0 290.0 L658.0 284.0 L666.0 281.0M626.0 304.0 L630.0 312.0 L638.0 316.0 L644.0 324.0 L652.0 328.0 L660.0 326.0 L668.0 330.0 L676.0 328.0 L684.0 334.0 L687.0 334.0M587.0 333.0 L584.0 342.0 L590.0 350.0 L586.0 358.0 L594.0 362.0 L602.0 360.0 L610.0 366.0 L620.0 362.0 L630.0 368.0 L640.0 364.0 L648.0 360.0M648.0 360.0 L652.0 350.0 L648.0 342.0 L654.0 334.0 L652.0 328.0M668.0 330.0 L664.0 340.0 L670.0 348.0 L666.0 356.0 L674.0 362.0 L670.0 370.0 L678.0 378.0 L684.0 374.0 L690.0 380.0 L698.0 384.0 L706.0 383.0M690.0 380.0 L686.0 388.0 L692.0 394.0 L697.0 394.0M648.0 360.0 L652.0 370.0 L646.0 378.0 L654.0 386.0 L662.0 384.0 L668.0 390.0 L676.0 386.0 L686.0 388.0M538.0 360.0 L546.0 364.0 L556.0 360.0 L566.0 364.0 L576.0 360.0 L586.0 358.0M556.0 360.0 L552.0 370.0 L558.0 378.0 L552.0 386.0 L544.0 384.0 L538.0 392.0 L530.0 388.0 L528.0 398.0 L536.0 404.0 L544.0 400.0 L552.0 406.0 L560.0 402.0 L566.0 410.0 L572.0 404.0 L570.0 394.0 L578.0 388.0 L574.0 378.0 L582.0 372.0 L576.0 360.0M530.0 427.0 L534.0 418.0 L542.0 414.0 L546.0 406.0 L552.0 406.0M572.0 404.0 L580.0 410.0 L590.0 406.0 L598.0 410.0 L606.0 404.0 L616.0 408.0 L624.0 402.0 L634.0 406.0 L640.0 398.0 L646.0 392.0 L654.0 386.0M572.0 404.0 L576.0 414.0 L572.0 424.0 L578.0 432.0 L574.0 442.0 L582.0 448.0 L590.0 444.0 L596.0 450.0M530.0 427.0 L526.0 438.0 L532.0 446.0 L526.0 456.0 L534.0 462.0 L542.0 458.0 L548.0 464.0M548.0 464.0 L556.0 458.0 L566.0 456.0 L574.0 450.0 L582.0 448.0M548.0 464.0 L540.0 470.0 L530.0 474.0 L524.0 482.0 L526.0 488.0M596.0 450.0 L604.0 456.0 L612.0 452.0 L620.0 458.0 L630.0 454.0 L640.0 460.0 L646.0 456.0M596.0 450.0 L592.0 460.0 L598.0 468.0 L592.0 478.0 L598.0 486.0 L592.0 494.0 L586.0 502.0 L582.0 511.0M634.0 406.0 L630.0 416.0 L636.0 426.0 L632.0 436.0 L638.0 446.0 L646.0 456.0M646.0 456.0 L654.0 462.0 L660.0 470.0 L656.0 478.0 L660.0 479.0M646.0 456.0 L652.0 446.0 L660.0 440.0 L664.0 430.0 L672.0 424.0 L676.0 414.0 L684.0 408.0 L680.0 398.0 L686.0 388.0M684.0 408.0 L692.0 414.0 L698.0 420.0 L704.0 425.0M650.0 252.0 L656.0 246.0 L664.0 248.0 L668.0 256.0 L662.0 262.0 L654.0 262.0 L650.0 252.0M664.0 262.0 L672.0 260.0 L676.0 268.0 L670.0 274.0 L665.0 272.0" fill="none" stroke="#1f6db5" stroke-width="2" stroke-linejoin="round" stroke-linecap="round"/>
<path d="M643 512.5 l2 1 l-1 2z M651 516.5 l2.5 1 l-1 2.5 l-2-1z M707 499.5 l1.5 .5 l-.5 1.500z M716 391.5 l2.5 1 l-1 2.5 l-2-1z M718.5 396.5 l2 1 l-1.5 1.500z" fill="#1f6db5"/>
</svg>
<div class="ptitle" style="font-size:14px">车辆地图分布</div>
<div class="lb" style="left:624px;top:69px"><i><b>北京市</b><u>0</u></i><s></s></div>
<div class="lb" style="left:633px;top:81px"><i><b>天津市</b><u>0</u></i><s></s></div>
<div class="lb" style="left:602px;top:97px"><i><b>河北省</b><u>0</u></i><s></s></div>
<div class="lb" style="left:581px;top:100px"><i><b>山西省</b><u>0</u></i><s></s></div>
<div class="lb" style="left:570px;top:56px"><i><b>内蒙古自治区</b><u>0</u></i><s></s></div>
<div class="lb" style="left:705px;top:41px"><i><b>辽宁省</b><u>0</u></i><s></s></div>
<div class="lb" style="left:725px;top:9px"><i><b>吉林省</b><u>0</u></i><s></s></div>
<div class="lb" style="left:741px;top:-21px"><i><b>黑龙江省</b><u>0</u></i><s></s></div>
<div class="lb" style="left:683px;top:191px"><i><b>上海市</b><u>0</u></i><s></s></div>
<div class="lb" style="left:652px;top:180px"><i><b>江苏省</b><u>0</u></i><s></s></div>
<div class="lb" style="left:666px;top:204px"><i><b>浙江省</b><u>0</u></i><s></s></div>
<div class="lb" style="left:634px;top:183px"><i><b>安徽省</b><u>0</u></i><s></s></div>
<div class="lb" style="left:657px;top:258px"><i><b>福建省</b><u>0</u></i><s></s></div>
<div class="lb" style="left:618px;top:225px"><i><b>江西省</b><u>0</u></i><s></s></div>
<div class="lb" style="left:631px;top:116px"><i><b>山东省</b><u>0</u></i><s></s></div>
<div class="lb" style="left:593px;top:143px"><i><b>河南省</b><u>0</u></i><s></s></div>
<div class="lb" style="left:600px;top:200px"><i><b>湖北省</b><u>0</u></i><s></s></div>
<div class="lb" style="left:585px;top:231px"><i><b>湖南省</b><u>0</u></i><s></s></div>
<div class="lb" style="left:589px;top:295px"><i><b>广东省</b><u>0</u></i><s></s></div>
<div class="lb" style="left:533px;top:299px"><i><b>广西壮族自治区</b><u>0</u></i><s></s></div>
<div class="lb" style="left:511px;top:213px"><i><b>重庆市</b><u>1</u></i><s></s></div>
<div class="lb" style="left:483px;top:199px"><i><b>四川省</b><u>0</u></i><s></s></div>
<div class="lb" style="left:514px;top:252px"><i><b>贵州省</b><u>0</u></i><s></s></div>
<div class="lb" style="left:469px;top:271px"><i><b>云南省</b><u>0</u></i><s></s></div>
<div class="lb" style="left:336px;top:212px"><i><b>西藏自治区</b><u>0</u></i><s></s></div>
<div class="lb" style="left:539px;top:150px"><i><b>陕西省</b><u>1</u></i><s></s></div>
<div class="lb" style="left:481px;top:125px"><i><b>甘肃省</b><u>0</u></i><s></s></div>
<div class="lb" style="left:458px;top:117px"><i><b>青海省</b><u>0</u></i><s></s></div>
<div class="lb" style="left:509px;top:91px"><i><b>宁夏回族自治区</b><u>0</u></i><s></s></div>
<div class="lb" style="left:296px;top:10px"><i><b>新疆维吾尔自治区</b><u>0</u></i><s></s></div>
<div class="lb" style="left:682px;top:271px"><i><b>台湾省</b><u>0</u></i><s></s></div>
<div class="lb" style="left:599px;top:305px"><i><b>香港特别行政区</b><u>0</u></i><s></s></div>
<div class="lb" style="left:591px;top:305px"><i><b>澳门特别行政区</b><u>0</u></i><s></s></div>
</div>
<div class="panel" style="left:1153px;top:163px;width:442px;height:155px"><div class="ptitle" style="font-size:14px">今日报警类型统计TOP10</div><div class="more">查看更多<span style="letter-spacing:2px">&gt;&gt;</span></div>
<svg class="abs" style="left:0;top:0" width="442" height="154" viewBox="0 0 442 154"><path d="M106.20 38.90 A53 53 0 0 1 114.10 144.31 L111.74 128.68 A37.2 37.2 0 0 0 106.20 54.70Z" fill="#ff00f5" stroke="#fff" stroke-width="1.6" stroke-linejoin="round"/><path d="M114.10 144.31 A53 53 0 0 1 64.76 58.86 L77.12 68.71 A37.2 37.2 0 0 0 111.74 128.68Z" fill="#b026ee" stroke="#fff" stroke-width="1.6" stroke-linejoin="round"/><path d="M64.76 58.86 A53 53 0 0 1 90.58 41.25 L95.24 56.35 A37.2 37.2 0 0 0 77.12 68.71Z" fill="#73c8ee" stroke="#fff" stroke-width="1.6" stroke-linejoin="round"/><path d="M90.58 41.25 A53 53 0 0 1 106.20 38.90 L106.20 54.70 A37.2 37.2 0 0 0 95.24 56.35Z" fill="#3f73e0" stroke="#fff" stroke-width="1.6" stroke-linejoin="round"/><text x="106.2" y="84.5" text-anchor="middle" font-size="13" font-weight="bold" fill="#3a82f5" font-family="Liberation Sans,Noto Sans CJK SC,sans-serif">21</text><text x="106.2" y="106.5" text-anchor="middle" font-size="12" fill="#444" font-family="Liberation Sans,Noto Sans CJK SC,sans-serif">报警总数</text><circle cx="385" cy="41.7" r="5" fill="#ff00f5"/><text x="395" y="45.7" font-size="11" fill="#444" font-family="Liberation Sans,Noto Sans CJK SC,sans-serif">超速</text><circle cx="385" cy="62.7" r="5" fill="#b026ee"/><text x="395" y="66.7" font-size="11" fill="#444" font-family="Liberation Sans,Noto Sans CJK SC,sans-serif">低速</text><circle cx="385" cy="83.7" r="5" fill="#73c8ee"/><text x="395" y="87.7" font-size="11" fill="#444" font-family="Liberation Sans,Noto Sans CJK SC,sans-serif">上线</text><circle cx="385" cy="104.7" r="5" fill="#3f73e0"/><text x="395" y="108.7" font-size="11" fill="#444" font-family="Liberation Sans,Noto Sans CJK SC,sans-serif">掉线</text></svg>
</div>
<div class="panel" style="left:1153px;top:328px;width:442px;height:195px"><div class="ptitle" style="font-size:14px">今日报警排行TOP7</div><div class="more">查看更多<span style="letter-spacing:2px">&gt;&gt;</span></div>
<svg class="abs" style="left:0;top:0" width="442" height="195" viewBox="0 0 442 195" font-family="Liberation Sans,Noto Sans CJK SC,sans-serif"><path d="M37.3 154.2 H427" stroke="#e4e7f2" stroke-width="1"/><text x="29" y="157.3" text-anchor="end" font-size="12" fill="#444">0</text><path d="M37.3 131.4 H427" stroke="#e4e7f2" stroke-width="1"/><text x="29" y="134.5" text-anchor="end" font-size="12" fill="#444">5</text><path d="M37.3 108.6 H427" stroke="#e4e7f2" stroke-width="1"/><text x="29" y="111.7" text-anchor="end" font-size="12" fill="#444">10</text><path d="M37.3 85.9 H427" stroke="#e4e7f2" stroke-width="1"/><text x="29" y="89.0" text-anchor="end" font-size="12" fill="#444">15</text><path d="M37.3 63.1 H427" stroke="#e4e7f2" stroke-width="1"/><text x="29" y="66.2" text-anchor="end" font-size="12" fill="#444">20</text><path d="M37.3 40.3 H427" stroke="#e4e7f2" stroke-width="1"/><text x="29" y="43.4" text-anchor="end" font-size="12" fill="#444">25</text><rect x="227" y="58.5" width="10" height="95.7" fill="#fc6c3f"/><text x="231.5" y="166" text-anchor="end" font-size="11" fill="#555" transform="rotate(-20 231.5 166)">加车测试1</text></svg>
</div>
<div class="panel" style="left:5px;top:533px;width:1138px;height:195px"><div class="ptitle" style="font-size:14px">日在线率及报警趋势统计</div>
<svg class="abs" style="left:0;top:0" width="1138" height="195" viewBox="0 0 1138 195" font-family="Liberation Sans,Noto Sans CJK SC,sans-serif"><path d="M37.8 170.1H1098.8M37.8 148.1H1098.8M37.8 126.1H1098.8M37.8 104.2H1098.8M37.8 82.2H1098.8M37.8 60.2H1098.8M37.8 170.1H1098.8M37.8 142.6H1098.8M37.8 115.2H1098.8M37.8 87.7H1098.8M37.8 60.2H1098.8M37.8 60.2V170.1M106.3 60.2V170.1M174.7 60.2V170.1M243.2 60.2V170.1M311.6 60.2V170.1M380.1 60.2V170.1M448.5 60.2V170.1M517.0 60.2V170.1M585.4 60.2V170.1M653.9 60.2V170.1M722.3 60.2V170.1M790.8 60.2V170.1M859.2 60.2V170.1M927.7 60.2V170.1M996.1 60.2V170.1M1064.6 60.2V170.1M1098.8 60.2V170.1" stroke="#e6e8f1" stroke-width="1" fill="none"/><text x="29.5" y="173.4" text-anchor="end" font-size="12" fill="#f2683c">0</text><text x="29.5" y="151.4" text-anchor="end" font-size="12" fill="#f2683c">5</text><text x="29.5" y="129.4" text-anchor="end" font-size="12" fill="#f2683c">10</text><text x="29.5" y="107.5" text-anchor="end" font-size="12" fill="#f2683c">15</text><text x="29.5" y="85.5" text-anchor="end" font-size="12" fill="#f2683c">20</text><text x="29.5" y="63.5" text-anchor="end" font-size="12" fill="#f2683c">25</text><text x="1106" y="173.4" font-size="12" fill="#3b9cf2">0</text><text x="1106" y="145.9" font-size="12" fill="#3b9cf2">0.5</text><text x="1106" y="118.5" font-size="12" fill="#3b9cf2">1</text><text x="1106" y="91.0" font-size="12" fill="#3b9cf2">1.5</text><text x="1106" y="63.5" font-size="12" fill="#3b9cf2">2</text><text x="54.9" y="187.3" text-anchor="middle" font-size="12" fill="#555">01-30</text><text x="123.4" y="187.3" text-anchor="middle" font-size="12" fill="#555">02-01</text><text x="191.8" y="187.3" text-anchor="middle" font-size="12" fill="#555">02-03</text><text x="260.3" y="187.3" text-anchor="middle" font-size="12" fill="#555">02-05</text><text x="328.7" y="187.3" text-anchor="middle" font-size="12" fill="#555">02-07</text><text x="397.2" y="187.3" text-anchor="middle" font-size="12" fill="#555">02-09</text><text x="465.6" y="187.3" text-anchor="middle" font-size="12" fill="#555">02-11</text><text x="534.1" y="187.3" text-anchor="middle" font-size="12" fill="#555">02-13</text><text x="602.5" y="187.3" text-anchor="middle" font-size="12" fill="#555">02-15</text><text x="671.0" y="187.3" text-anchor="middle" font-size="12" fill="#555">02-17</text><text x="739.4" y="187.3" text-anchor="middle" font-size="12" fill="#555">02-19</text><text x="807.9" y="187.3" text-anchor="middle" font-size="12" fill="#555">02-21</text><text x="876.3" y="187.3" text-anchor="middle" font-size="12" fill="#555">02-23</text><text x="944.8" y="187.3" text-anchor="middle" font-size="12" fill="#555">02-25</text><text x="1013.2" y="187.3" text-anchor="middle" font-size="12" fill="#555">02-27</text><text x="1081.7" y="187.3" text-anchor="middle" font-size="12" fill="#555">02-29</text><path d="M54.9 170.1 L89.1 170.1 L123.4 170.1 L157.6 170.1 L191.8 170.1 L226.0 170.1 L260.3 170.1 L294.5 170.1 L328.7 170.1 L362.9 170.1 L397.2 170.1 L431.4 170.1 L465.6 170.1 L499.8 170.1 L534.1 170.1 L568.3 170.1 L602.5 170.1 L636.8 170.1 L671.0 170.1 L705.2 170.1 L739.4 170.1 L773.7 170.1 L807.9 170.1 L842.1 170.1 L876.3 170.1 L910.6 170.1 L944.8 170.1 L979.0 170.1 L1013.2 170.1 L1047.5 170.1 L1081.7 77.8" fill="none" stroke="#f2683c" stroke-width="1.2" stroke-linejoin="round"/><circle cx="54.9" cy="170.1" r="2" fill="#fff" stroke="#f2683c" stroke-width="1"/><circle cx="89.1" cy="170.1" r="2" fill="#fff" stroke="#f2683c" stroke-width="1"/><circle cx="123.4" cy="170.1" r="2" fill="#fff" stroke="#f2683c" stroke-width="1"/><circle cx="157.6" cy="170.1" r="2" fill="#fff" stroke="#f2683c" stroke-width="1"/><circle cx="191.8" cy="170.1" r="2" fill="#fff" stroke="#f2683c" stroke-width="1"/><circle cx="226.0" cy="170.1" r="2" fill="#fff" stroke="#f2683c" stroke-width="1"/><circle cx="260.3" cy="170.1" r="2" fill="#fff" stroke="#f2683c" stroke-width="1"/><circle cx="294.5" cy="170.1" r="2" fill="#fff" stroke="#f2683c" stroke-width="1"/><circle cx="328.7" cy="170.1" r="2" fill="#fff" stroke="#f2683c" stroke-width="1"/><circle cx="362.9" cy="170.1" r="2" fill="#fff" stroke="#f2683c" stroke-width="1"/><circle cx="397.2" cy="170.1" r="2" fill="#fff" stroke="#f2683c" stroke-width="1"/><circle cx="431.4" cy="170.1" r="2" fill="#fff" stroke="#f2683c" stroke-width="1"/><circle cx="465.6" cy="170.1" r="2" fill="#fff" stroke="#f2683c" stroke-width="1"/><circle cx="499.8" cy="170.1" r="2" fill="#fff" stroke="#f2683c" stroke-width="1"/><circle cx="534.1" cy="170.1" r="2" fill="#fff" stroke="#f2683c" stroke-width="1"/><circle cx="568.3" cy="170.1" r="2" fill="#fff" stroke="#f2683c" stroke-width="1"/><circle cx="602.5" cy="170.1" r="2" fill="#fff" stroke="#f2683c" stroke-width="1"/><circle cx="636.8" cy="170.1" r="2" fill="#fff" stroke="#f2683c" stroke-width="1"/><circle cx="671.0" cy="170.1" r="2" fill="#fff" stroke="#f2683c" stroke-width="1"/><circle cx="705.2" cy="170.1" r="2" fill="#fff" stroke="#f2683c" stroke-width="1"/><circle cx="739.4" cy="170.1" r="2" fill="#fff" stroke="#f2683c" stroke-width="1"/><circle cx="773.7" cy="170.1" r="2" fill="#fff" stroke="#f2683c" stroke-width="1"/><circle cx="807.9" cy="170.1" r="2" fill="#fff" stroke="#f2683c" stroke-width="1"/><circle cx="842.1" cy="170.1" r="2" fill="#fff" stroke="#f2683c" stroke-width="1"/><circle cx="876.3" cy="170.1" r="2" fill="#fff" stroke="#f2683c" stroke-width="1"/><circle cx="910.6" cy="170.1" r="2" fill="#fff" stroke="#f2683c" stroke-width="1"/><circle cx="944.8" cy="170.1" r="2" fill="#fff" stroke="#f2683c" stroke-width="1"/><circle cx="979.0" cy="170.1" r="2" fill="#fff" stroke="#f2683c" stroke-width="1"/><circle cx="1013.2" cy="170.1" r="2" fill="#fff" stroke="#f2683c" stroke-width="1"/><circle cx="1047.5" cy="170.1" r="2" fill="#fff" stroke="#f2683c" stroke-width="1"/><circle cx="1081.7" cy="77.8" r="2" fill="#fff" stroke="#f2683c" stroke-width="1"/><path d="M1047.5 170.1 L1081.7 77.8" stroke="#f2683c" stroke-width="2" fill="none"/><circle cx="1081.7" cy="77.8" r="2" fill="#fff" stroke="#f2683c"/><path d="M54.9 170.1 L89.1 170.1 L123.4 170.1 L157.6 170.1 L191.8 170.1 L226.0 170.1 L260.3 170.1 L294.5 170.1 L328.7 170.1 L362.9 170.1 L397.2 170.1 L431.4 170.1 L465.6 170.1 L499.8 170.1 L534.1 170.1 L568.3 170.1 L602.5 170.1 L636.8 170.1 L671.0 170.1 L705.2 170.1 L739.4 170.1 L773.7 170.1 L807.9 170.1 L842.1 170.1 L876.3 170.1 L910.6 170.1 L944.8 170.1 L979.0 170.1 L1013.2 170.1 L1047.5 170.1 L1081.7 60.2" fill="none" stroke="#3b9cf2" stroke-width="2" stroke-linejoin="round"/><circle cx="54.9" cy="170.1" r="2" fill="#fff" stroke="#3b9cf2" stroke-width="1"/><circle cx="89.1" cy="170.1" r="2" fill="#fff" stroke="#3b9cf2" stroke-width="1"/><circle cx="123.4" cy="170.1" r="2" fill="#fff" stroke="#3b9cf2" stroke-width="1"/><circle cx="157.6" cy="170.1" r="2" fill="#fff" stroke="#3b9cf2" stroke-width="1"/><circle cx="191.8" cy="170.1" r="2" fill="#fff" stroke="#3b9cf2" stroke-width="1"/><circle cx="226.0" cy="170.1" r="2" fill="#fff" stroke="#3b9cf2" stroke-width="1"/><circle cx="260.3" cy="170.1" r="2" fill="#fff" stroke="#3b9cf2" stroke-width="1"/><circle cx="294.5" cy="170.1" r="2" fill="#fff" stroke="#3b9cf2" stroke-width="1"/><circle cx="328.7" cy="170.1" r="2" fill="#fff" stroke="#3b9cf2" stroke-width="1"/><circle cx="362.9" cy="170.1" r="2" fill="#fff" stroke="#3b9cf2" stroke-width="1"/><circle cx="397.2" cy="170.1" r="2" fill="#fff" stroke="#3b9cf2" stroke-width="1"/><circle cx="431.4" cy="170.1" r="2" fill="#fff" stroke="#3b9cf2" stroke-width="1"/><circle cx="465.6" cy="170.1" r="2" fill="#fff" stroke="#3b9cf2" stroke-width="1"/><circle cx="499.8" cy="170.1" r="2" fill="#fff" stroke="#3b9cf2" stroke-width="1"/><circle cx="534.1" cy="170.1" r="2" fill="#fff" stroke="#3b9cf2" stroke-width="1"/><circle cx="568.3" cy="170.1" r="2" fill="#fff" stroke="#3b9cf2" stroke-width="1"/><circle cx="602.5" cy="170.1" r="2" fill="#fff" stroke="#3b9cf2" stroke-width="1"/><circle cx="636.8" cy="170.1" r="2" fill="#fff" stroke="#3b9cf2" stroke-width="1"/><circle cx="671.0" cy="170.1" r="2" fill="#fff" stroke="#3b9cf2" stroke-width="1"/><circle cx="705.2" cy="170.1" r="2" fill="#fff" stroke="#3b9cf2" stroke-width="1"/><circle cx="739.4" cy="170.1" r="2" fill="#fff" stroke="#3b9cf2" stroke-width="1"/><circle cx="773.7" cy="170.1" r="2" fill="#fff" stroke="#3b9cf2" stroke-width="1"/><circle cx="807.9" cy="170.1" r="2" fill="#fff" stroke="#3b9cf2" stroke-width="1"/><circle cx="842.1" cy="170.1" r="2" fill="#fff" stroke="#3b9cf2" stroke-width="1"/><circle cx="876.3" cy="170.1" r="2" fill="#fff" stroke="#3b9cf2" stroke-width="1"/><circle cx="910.6" cy="170.1" r="2" fill="#fff" stroke="#3b9cf2" stroke-width="1"/><circle cx="944.8" cy="170.1" r="2" fill="#fff" stroke="#3b9cf2" stroke-width="1"/><circle cx="979.0" cy="170.1" r="2" fill="#fff" stroke="#3b9cf2" stroke-width="1"/><circle cx="1013.2" cy="170.1" r="2" fill="#fff" stroke="#3b9cf2" stroke-width="1"/><circle cx="1047.5" cy="170.1" r="2" fill="#fff" stroke="#3b9cf2" stroke-width="1"/><circle cx="1081.7" cy="60.2" r="2" fill="#fff" stroke="#3b9cf2" stroke-width="1"/><circle cx="495.5" cy="44" r="5" fill="#3b9cf2"/><text x="506" y="48.3" font-size="12" fill="#444">日在线数</text><circle cx="578.5" cy="44" r="5" fill="#f2683c"/><text x="589" y="48.3" font-size="12" fill="#444">日报警数</text></svg>
</div>
<div class="panel" style="left:1153px;top:533px;width:442px;height:195px"><div class="ptitle" style="font-size:14px">本月视频查看时长TOP5</div><div class="abs" style="left:0;top:101.500px;width:434px;text-align:center;font-size:16px;color:#666;line-height:24px">暂无数据!</div></div>
<div class="abs" style="left:1566px;top:444.300px;width:30px;height:30px;border-radius:50%;background:#fff;box-shadow:0 1.500px 4px rgba(0,0,0,.22)"><svg class="abs" style="left:7px;top:7px" width="16" height="16" viewBox="0 0 16 16"><path d="M1.2 4.3 h13.6 a.7 .7 0 0 1 .7 .7 v2.5 h-15 v-2.5 a.7 .7 0 0 1 .7 -.7z M1.2 8.2 h5.9 v6.8 h-5.2 a.7 .7 0 0 1 -.7 -.7z M8.9 8.2 h5.9 v6.1 a.7 .7 0 0 1 -.7 .7 h-5.200z" fill="#0a7ae6"/><path d="M8 4.5 C6 4.5 4 3.5 4.5 2 C5 .5 7.5 1.5 8 4.5 C8.5 1.5 11 .5 11.5 2 C12 3.5 10 4.5 8 4.5" fill="none" stroke="#0a7ae6" stroke-width="1.3"/><path d="M7.3 4.5 h1.4 v3 h-1.400z" fill="#fff"/></svg></div>
</body></html>
